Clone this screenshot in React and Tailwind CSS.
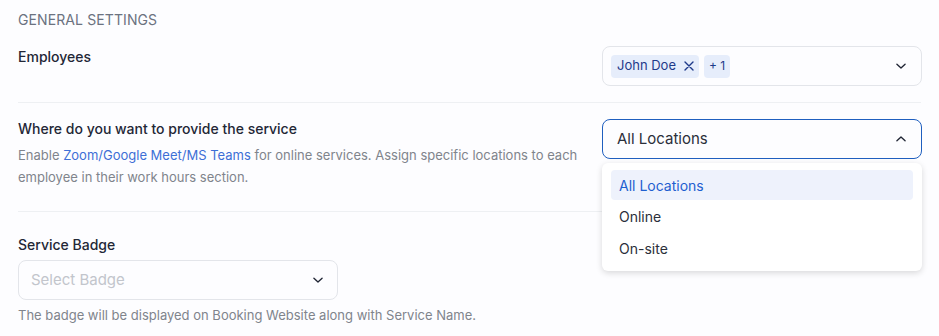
import React from "react";

const Chevron = ({ up = false, className = "" }) => (
  <svg width="14" height="14" viewBox="0 0 24 24" fill="none" stroke="currentColor" strokeWidth="2.3" strokeLinecap="round" strokeLinejoin="round" className={className}>
    {up ? <path d="M5 15l7-6.5 7 6.5" /> : <path d="M5 9l7 6.5 7-6.5" />}
  </svg>
);

export default function App() {
  return (
    <div className="w-[939px] h-[336px] bg-[#fdfdff] overflow-hidden relative" style={{ fontFamily: "Inter, 'Noto Sans', sans-serif" }}>
      <div className="pl-[18px] pr-[18px]">
        <div className="pt-[11px] text-[14px] leading-[17px] text-[#6b7280] tracking-[0.1px]">GENERAL SETTINGS</div>

        {/* Employees */}
        <div className="flex justify-between items-start pt-[18px] pb-[16px] border-b border-[#eef0f3]">
          <div className="pt-[2px] text-[14px] leading-[17px] font-medium text-[#232736]">Employees</div>
          <div className="w-[320px] h-[40px] mr-[-1px] border border-[#e3e5ea] rounded-lg flex items-center pl-[8px] pr-[13px]">
            <div className="flex items-center gap-[5px] flex-1">
              <span className="h-[23px] pl-[6px] pr-[5px] rounded bg-[#e6edfb] text-[#1e3a8a] text-[13px] flex items-center gap-[8px]">
                John Doe
                <svg width="10" height="10" viewBox="0 0 10 10" stroke="currentColor" strokeWidth="1.4" strokeLinecap="round"><path d="M1 1l8 8M9 1L1 9" /></svg>
              </span>
              <span className="h-[23px] px-[5px] rounded bg-[#e6edfb] text-[#1e3a8a] text-[12px] flex items-center">+ 1</span>
            </div>
            <Chevron className="text-[#1f2433]" />
          </div>
        </div>

        {/* Where */}
        <div className="flex justify-between items-start pt-[16px] pb-[23px] border-b border-[#eef0f3]">
          <div className="w-[580px]">
            <div className="pt-[1px] text-[14px] leading-[17px] font-medium text-[#232736]">Where do you want to provide the service</div>
            <p className="mt-[7px] text-[13px] leading-[22px] text-[#80848c]">
              Enable <span className="text-[#3d6fd6]">Zoom/Google Meet/MS Teams</span> for online services. Assign specific locations to each employee in their work hours section.
            </p>
          </div>
          <div className="w-[320px] h-[40px] mr-[-1px] border border-[#1f5fbf] rounded-lg flex items-center justify-between pl-[14px] pr-[13px] text-[15px] text-[#2b2f3a]">
            All Locations
            <Chevron up className="text-[#1f2433]" />
          </div>
        </div>

        {/* Service badge */}
        <div className="pt-[24px]">
          <div className="text-[14px] leading-[17px] font-medium text-[#232736]">Service Badge</div>
          <div className="mt-[7px] w-[320px] h-[40px] border border-[#e3e5ea] rounded-lg flex items-center justify-between pl-[12px] pr-[12px] text-[15px] text-[#c2c5cc]">
            Select Badge
            <Chevron className="text-[#1f2433]" />
          </div>
          <div className="mt-[7px] text-[13px] leading-[16px] text-[#80848c]">The badge will be displayed on Booking Website along with Service Name.</div>
        </div>
      </div>

      {/* Dropdown menu */}
      <div className="absolute left-[602px] top-[163px] w-[320px] h-[108px] bg-white rounded-md shadow-[0_2px_6px_rgba(0,0,0,0.15)] px-[9px] pt-[7px]">
        <div className="h-[30px] rounded bg-[#eef2fc] text-[#1f5fd0] text-[14px] flex items-center pl-[8px]">All Locations</div>
        <div className="h-[32px] text-[#2b2f3a] text-[14px] flex items-center pl-[8px]">Online</div>
        <div className="h-[32px] text-[#2b2f3a] text-[14px] flex items-center pl-[8px]">On-site</div>
      </div>
    </div>
  );
}
